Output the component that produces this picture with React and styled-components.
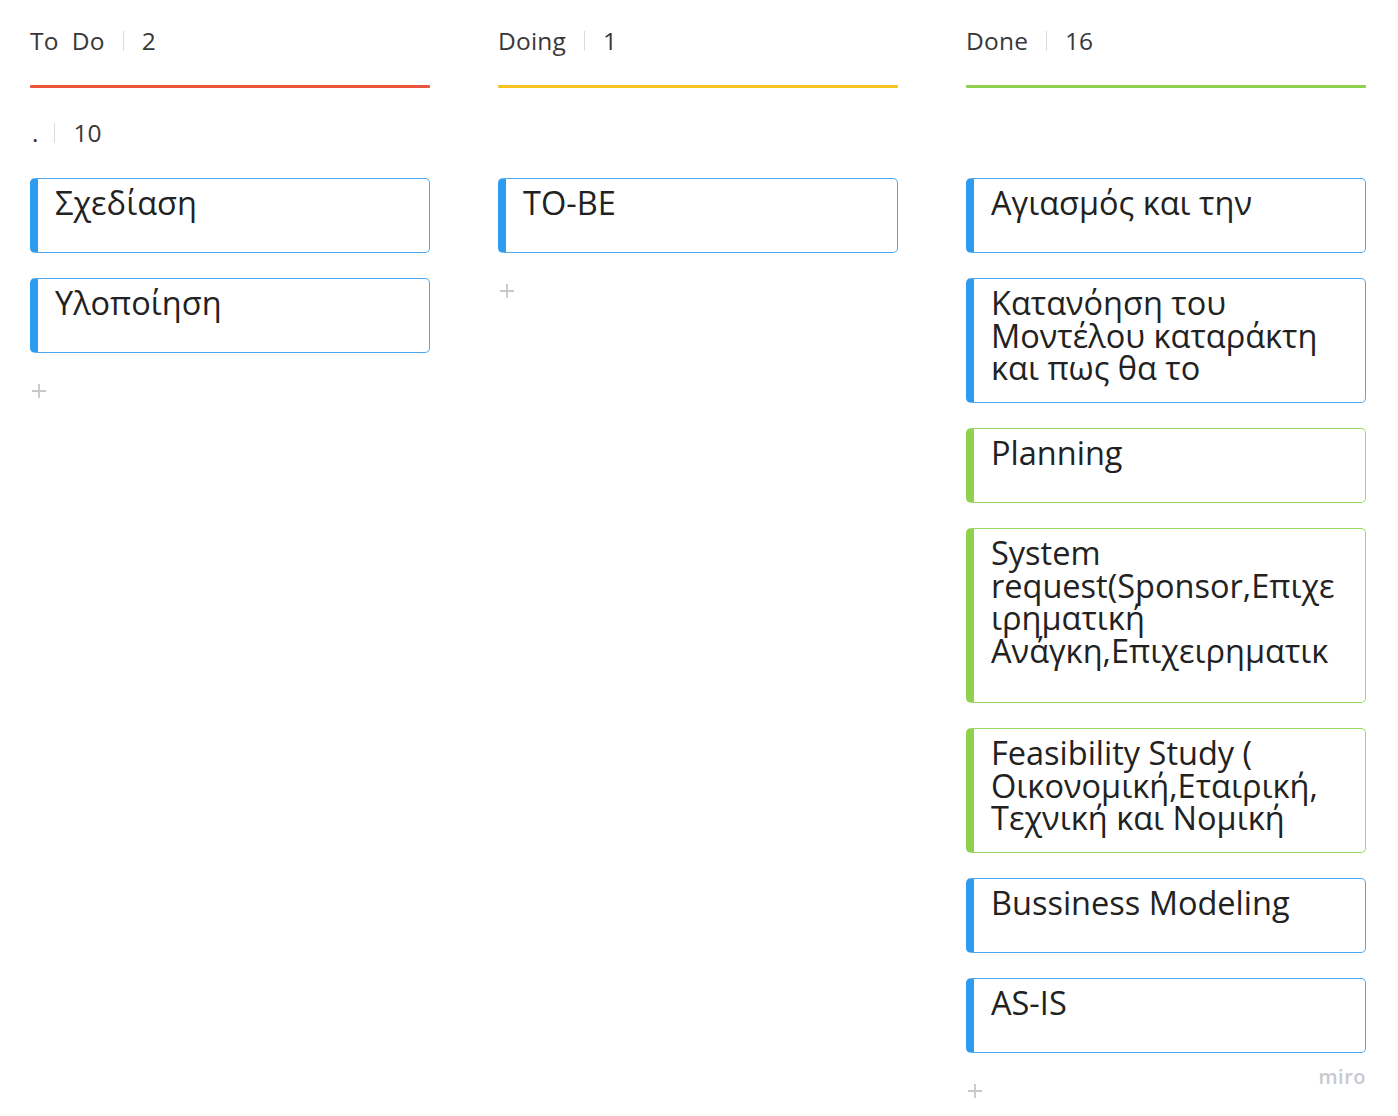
import React from "react";
import styled, { createGlobalStyle } from "styled-components";

const GlobalStyle = createGlobalStyle`
  html, body {
    margin: 0;
    padding: 0;
    background: #ffffff;
  }
  body {
    font-family: "Open Sans", "Noto Sans", sans-serif;
    color: #333333;
  }
`;

const COLORS = {
  red: "#e9553d",
  yellow: "#f7c31e",
  green: "#8fd14f",
  blue: "#2d9bf0",
};

const EDGES = {
  blue: "#4ea6ec",
  green: "#9ad662",
};

const columns = [
  {
    title: "To  Do",
    count: 2,
    line: COLORS.red,
    group: { name: ".", count: 10 },
    cards: [
      { text: "Σχεδίαση", color: "blue", height: 75 },
      { text: "Υλοποίηση", color: "blue", height: 75 },
    ],
  },
  {
    title: "Doing",
    count: 1,
    line: COLORS.yellow,
    cards: [{ text: "TO-BE", color: "blue", height: 75 }],
  },
  {
    title: "Done",
    count: 16,
    line: COLORS.green,
    cards: [
      { text: "Αγιασμός και την", color: "blue", height: 75 },
      {
        text: "Κατανόηση του Μοντέλου καταράκτη και πως θα το",
        color: "blue",
        height: 125,
      },
      { text: "Planning", color: "green", height: 75 },
      {
        text: "System request(Sponsor,Επιχειρηματική Ανάγκη,Επιχειρηματικ",
        color: "green",
        height: 175,
      },
      {
        text: "Feasibility Study ( Οικονομική,Εταιρική, Τεχνική και Νομική",
        color: "green",
        height: 125,
      },
      { text: "Bussiness Modeling", color: "blue", height: 75 },
      { text: "AS-IS", color: "blue", height: 75 },
    ],
  },
];

function PlusIcon() {
  return (
    <svg width="16" height="16" viewBox="0 0 16 16">
      <path d="M8 1v14M1 8h14" stroke="#c8c8c8" strokeWidth="1.8" fill="none" />
    </svg>
  );
}

function App() {
  return (
    <>
      <GlobalStyle />
      <Board>
        {columns.map((col) => (
          <Column key={col.title}>
            <Header>
              <Title>{col.title}</Title>
              <Divider />
              <Count>{col.count}</Count>
            </Header>
            <ColorLine color={col.line} />
            <GroupRow>
              {col.group && (
                <>
                  <GroupName>{col.group.name}</GroupName>
                  <Divider />
                  <Count>{col.group.count}</Count>
                </>
              )}
            </GroupRow>
            <CardList>
              {col.cards.map((card, i) => (
                <Card
                  key={i}
                  accent={COLORS[card.color]}
                  edge={EDGES[card.color]}
                  h={card.height}
                >
                  <CardText>{card.text}</CardText>
                </Card>
              ))}
            </CardList>
            <AddButton>
              <PlusIcon />
            </AddButton>
          </Column>
        ))}
      </Board>
      <Watermark>miro</Watermark>
    </>
  );
}

const Board = styled.div`
  display: grid;
  grid-template-columns: repeat(3, 400px);
  column-gap: 68px;
  padding: 23px 30px 0 30px;
  min-height: 1116px;
  box-sizing: border-box;
`;

const Column = styled.div`
  display: flex;
  flex-direction: column;
`;

const Header = styled.div`
  display: flex;
  align-items: center;
  height: 36px;
  font-size: 24.5px;
  line-height: 36px;
  color: #383838;
`;

const Title = styled.span`
  white-space: pre;
  letter-spacing: 0.2px;
`;

const Divider = styled.span`
  display: inline-block;
  width: 1px;
  height: 20px;
  background: #dcdcdc;
  margin: 0 18px 0 18px;
`;

const Count = styled.span`
  color: #383838;
`;

const ColorLine = styled.div`
  height: 3px;
  margin-top: 26px;
  background: ${(p) => p.color};
  border-radius: 1px;
`;

const GroupRow = styled.div`
  display: flex;
  align-items: center;
  height: 36px;
  margin-top: 27px;
  font-size: 24.5px;
  line-height: 36px;
  padding-left: 2px;
`;

const GroupName = styled.span`
  margin-right: -2px;
`;

const CardList = styled.div`
  display: flex;
  flex-direction: column;
  gap: 25px;
  margin-top: 27px;
`;

const Card = styled.div`
  box-sizing: border-box;
  height: ${(p) => p.h}px;
  border: 1px solid ${(p) => p.edge};
  border-left: 8px solid ${(p) => p.accent};
  border-radius: 5px;
  padding: 8px 25px 0 17px;
  overflow: hidden;
  background: #ffffff;
`;

const CardText = styled.div`
  font-size: 32.5px;
  line-height: 32.5px;
  color: #222222;
  overflow-wrap: anywhere;
`;

const AddButton = styled.div`
  display: flex;
  margin-top: 30px;
  padding-left: 1px;
`;

const Watermark = styled.div`
  position: absolute;
  right: 32px;
  top: 1063px;
  font-size: 20px;
  font-weight: 600;
  color: #c9c9d1;
  letter-spacing: 0.5px;
`;

export default App;
